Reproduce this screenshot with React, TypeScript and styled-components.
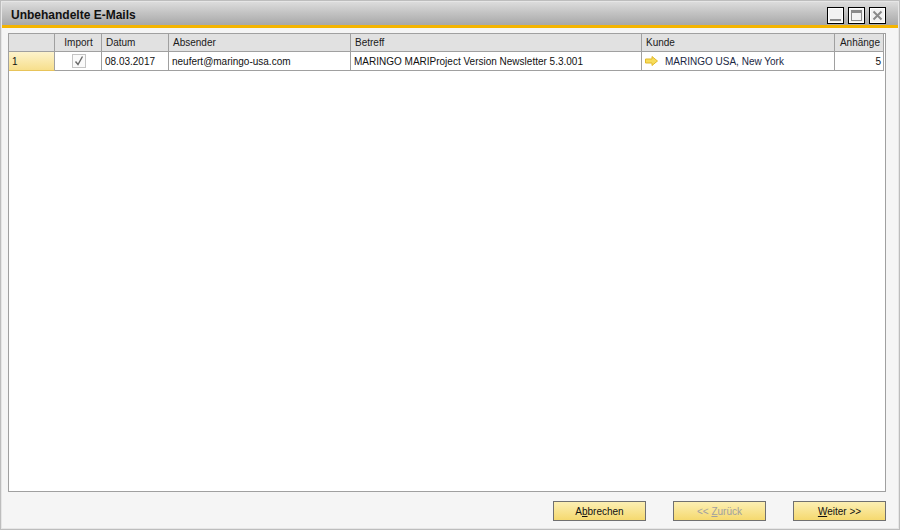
import React from "react";
import styled, { createGlobalStyle } from "styled-components";

const Global = createGlobalStyle`
  html, body { margin: 0; padding: 0; background: #ffffff; }
  * { box-sizing: border-box; }
  body { font-family: "Liberation Sans", Arial, sans-serif; font-size: 10px; }
`;

const Window = styled.div`
  width: 900px;
  height: 530px;
  border: 1px solid #bdbdbd;
  background: #f5f5f5;
  display: flex;
  flex-direction: column;
  padding: 1px;
  box-shadow: inset 0 0 0 1px #e6e6e6;
`;

const TitleBar = styled.div`
  height: 23px;
  flex: none;
  display: flex;
  align-items: flex-start;
  justify-content: space-between;
  padding: 0 12px 0 9px;
  background: linear-gradient(#dcdcdc, #c4c4c4 45%, #a8a8a8);
`;

const Title = styled.div`
  font-family: "Liberation Sans", Arial, sans-serif;
  font-weight: bold;
  font-size: 12px;
  line-height: 14px;
  color: #111;
  padding-top: 6px;
`;

const WinButtons = styled.div`
  display: flex;
  gap: 4px;
  padding-top: 5px;
`;

const WinButton = styled.div`
  width: 17px;
  height: 17px;
  border: 1px solid #000;
  background: #f2f2f2;
  box-shadow: inset 0 0 0 1px #ffffff;
  display: flex;
  align-items: center;
  justify-content: center;
`;

const Accent = styled.div`
  height: 3px;
  flex: none;
  background: #f4b400;
`;

const Body = styled.div`
  flex: 1;
  display: flex;
  flex-direction: column;
  padding: 5px 12px 6px 6px;
`;

const GridBox = styled.div`
  flex: 1;
  border: 1px solid #a0a0a0;
  background: #ffffff;
  width: 878px;
`;

const cols = "46px 47px 67px 182px 291px 193px 49px";

const Row = styled.div`
  display: grid;
  grid-template-columns: ${cols};
  width: 875px;
`;

const HeadCell = styled.div<{ $align?: string }>`
  height: 18px;
  background: #e1e1e1;
  border-right: 1px solid #a0a0a0;
  border-bottom: 1px solid #a0a0a0;
  color: #1a1a1a;
  display: flex;
  align-items: center;
  justify-content: ${(p) => p.$align || "flex-start"};
  padding: 0 3px 0 4px;
  white-space: nowrap;
  overflow: hidden;
`;

const Cell = styled.div<{ $align?: string; $color?: string }>`
  height: 19px;
  border-right: 1px solid #a0a0a0;
  border-bottom: 1px solid #a0a0a0;
  color: ${(p) => p.$color || "#111"};
  display: flex;
  align-items: center;
  justify-content: ${(p) => p.$align || "flex-start"};
  padding: 0 2px 0 3px;
  white-space: nowrap;
  overflow: hidden;
  gap: 7px;
`;

const RowNum = styled(Cell)`
  background: linear-gradient(#fdf3cc, #f7df8c);
  border-bottom: 1px solid #e8c45a;
`;

const CheckBox = styled.div`
  width: 14px;
  height: 14px;
  border: 1px solid #c4c4c4;
  background: #fafafa;
  display: flex;
  align-items: center;
  justify-content: center;
`;

const Footer = styled.div`
  flex: none;
  height: 30px;
  display: flex;
  justify-content: flex-end;
  align-items: flex-end;
  gap: 27px;
  width: 878px;
`;

const Button = styled.button<{ $disabled?: boolean }>`
  width: 93px;
  height: 20px;
  margin: 0 0 1px 0;
  border: 1px solid #707070;
  background: linear-gradient(#fcefb3, #f5d96f);
  font-family: "Liberation Sans", Arial, sans-serif;
  font-size: 10px;
  color: ${(p) => (p.$disabled ? "#a0a0a0" : "#111")};
  padding: 0;
  cursor: default;
  u { text-decoration: underline; }
`;

const Arrow = () => (
  <svg width="13" height="10" viewBox="0 0 13 10">
    <path d="M0.5 3 H7 V0.5 L12.5 5 L7 9.5 V7 H0.5 Z" fill="#f7dc5a" stroke="#e2b92a" strokeWidth="1" />
  </svg>
);

export default function App() {
  return (
    <>
      <Global />
      <Window>
        <TitleBar>
          <Title>Unbehandelte E-Mails</Title>
          <WinButtons>
            <WinButton>
              <svg width="13" height="13" viewBox="0 0 13 13">
                <rect x="1" y="10" width="11" height="2" fill="#8a8a8a" />
              </svg>
            </WinButton>
            <WinButton>
              <svg width="13" height="13" viewBox="0 0 13 13">
                <rect x="1.5" y="1.5" width="10" height="10" fill="none" stroke="#8a8a8a" />
                <rect x="1" y="1" width="11" height="3" fill="#8a8a8a" />
              </svg>
            </WinButton>
            <WinButton>
              <svg width="13" height="13" viewBox="0 0 13 13">
                <path d="M2.5 2.5 L10.5 10.5 M10.5 2.5 L2.5 10.5" stroke="#8a8a8a" strokeWidth="2" />
              </svg>
            </WinButton>
          </WinButtons>
        </TitleBar>
        <Accent />
        <Body>
          <GridBox>
            <Row>
              <HeadCell />
              <HeadCell $align="center">Import</HeadCell>
              <HeadCell>Datum</HeadCell>
              <HeadCell>Absender</HeadCell>
              <HeadCell>Betreff</HeadCell>
              <HeadCell>Kunde</HeadCell>
              <HeadCell $align="flex-end">Anhänge</HeadCell>
            </Row>
            <Row>
              <RowNum>1</RowNum>
              <Cell $align="center">
                <CheckBox>
                  <svg width="10" height="10" viewBox="0 0 10 10">
                    <path d="M1.5 5.5 L4 8.5 L8.5 0.5" fill="none" stroke="#6a6a6a" strokeWidth="1.4" />
                  </svg>
                </CheckBox>
              </Cell>
              <Cell>08.03.2017</Cell>
              <Cell>neufert@maringo-usa.com</Cell>
              <Cell>MARINGO MARIProject Version Newsletter 5.3.001</Cell>
              <Cell $color="#1a2744">
                <Arrow />
                MARINGO USA, New York
              </Cell>
              <Cell $align="flex-end">5</Cell>
            </Row>
          </GridBox>
          <Footer>
            <Button>
              A<u>b</u>brechen
            </Button>
            <Button $disabled>
              &lt;&lt; <u>Z</u>urück
            </Button>
            <Button>
              <u>W</u>eiter &gt;&gt;
            </Button>
          </Footer>
        </Body>
      </Window>
    </>
  );
}
